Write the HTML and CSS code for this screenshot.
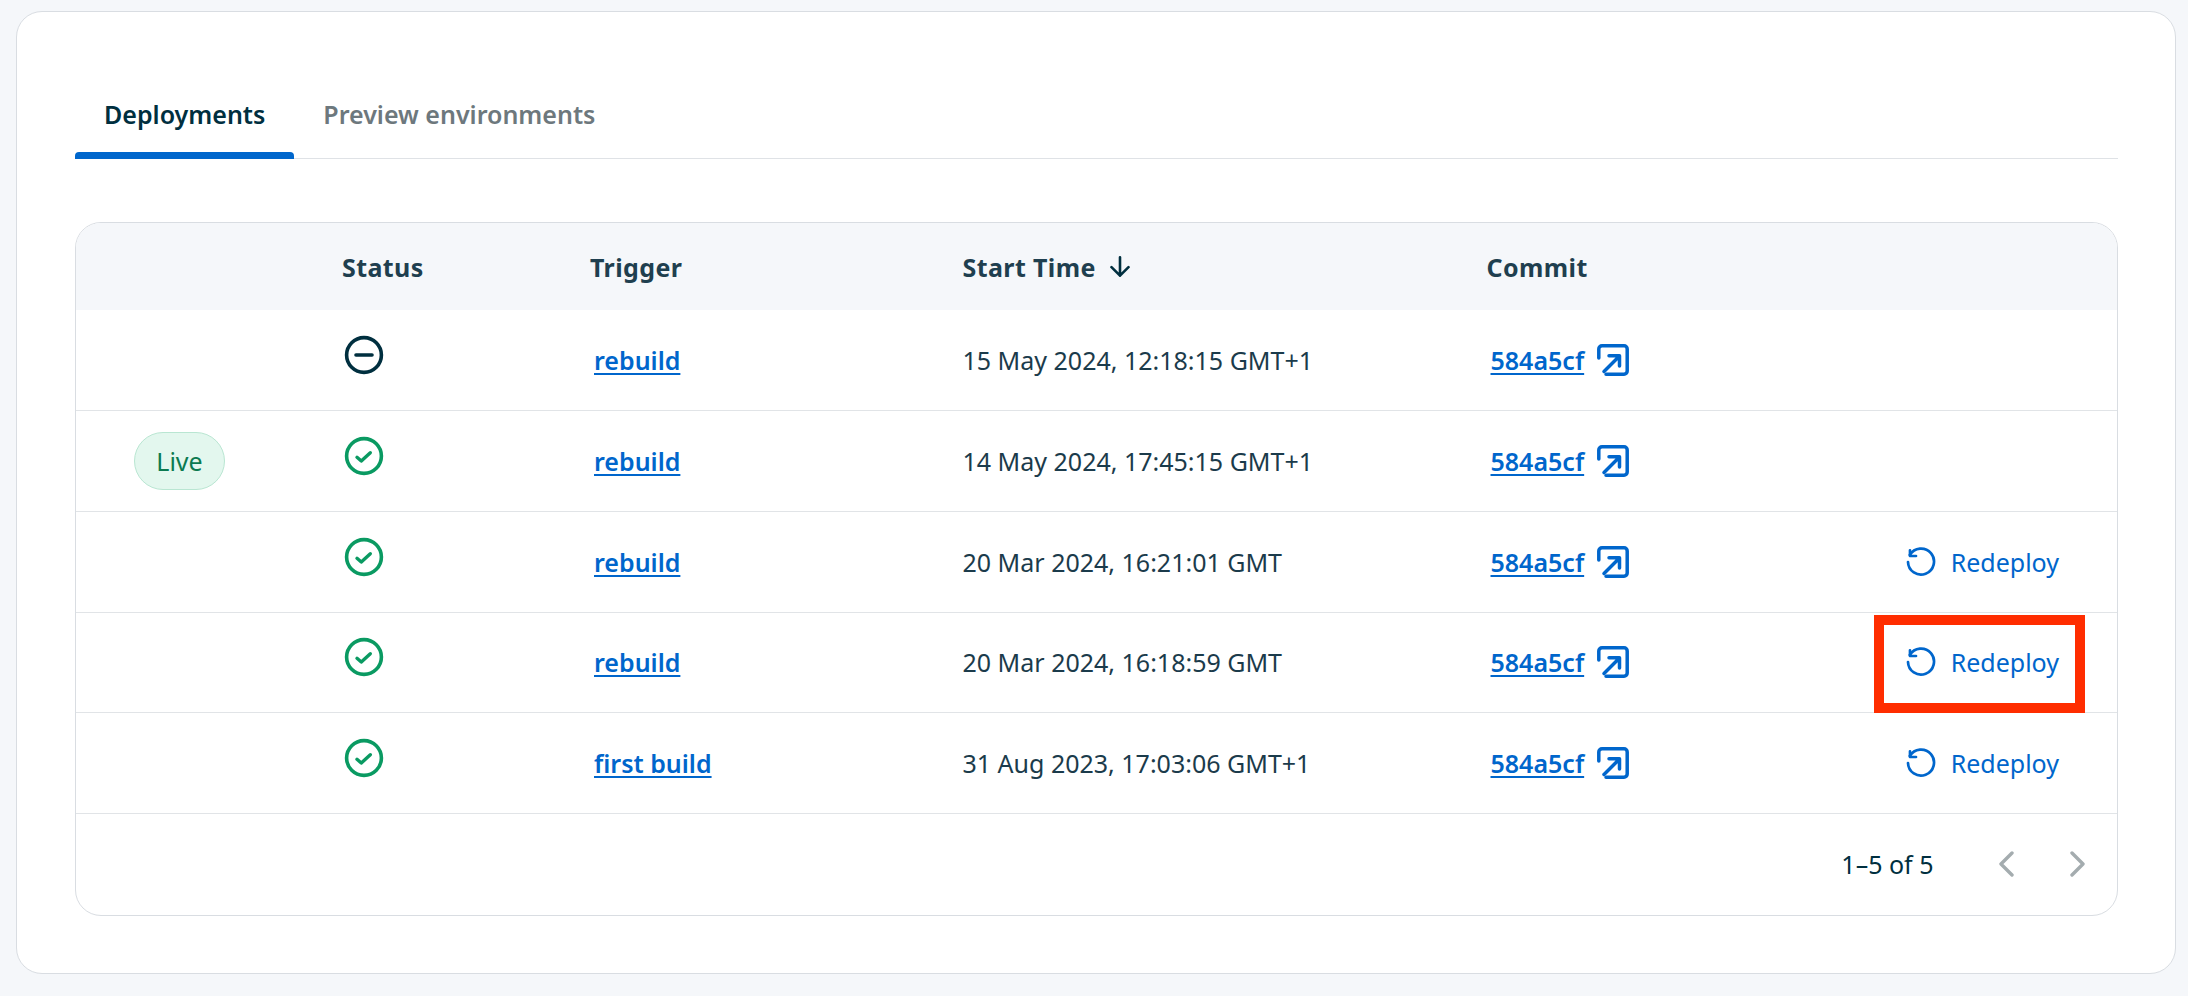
FILE: index.html
```html
<!DOCTYPE html>
<html lang="en">
<head>
<meta charset="utf-8">
<title>Deployments</title>
<link rel="stylesheet" href="styles.css">
</head>
<body>
<svg class="sprites" aria-hidden="true">
  <symbol id="i-minus" viewBox="0 0 40 40"><circle cx="20" cy="20" r="17.4" fill="none" stroke="currentColor" stroke-width="3.6"/><path d="M12 20h16" fill="none" stroke="currentColor" stroke-width="3.6" stroke-linecap="round"/></symbol>
  <symbol id="i-check" viewBox="0 0 40 40"><circle cx="20" cy="20" r="17.4" fill="none" stroke="currentColor" stroke-width="3.6"/><path d="M13 21.300l4.300 3.700 9-8.300" fill="none" stroke="currentColor" stroke-width="3.400" stroke-linecap="round" stroke-linejoin="round"/></symbol>
  <symbol id="i-ext" viewBox="0 0 32 32"><path d="M1.800 14V5a3.200 3.200 0 0 1 3.200-3.200H27a3.200 3.200 0 0 1 3.200 3.200V27a3.200 3.200 0 0 1-3.200 3.200H9" fill="none" stroke="currentColor" stroke-width="3.500" stroke-linecap="round"/><path d="M7 27.500L21 13.500M12 11.800H22.500V22" fill="none" stroke="currentColor" stroke-width="3.500" stroke-linecap="round" stroke-linejoin="round"/></symbol>
  <symbol id="i-redo" viewBox="0 0 30 30"><path d="M3.800 8A13 13 0 1 1 2 15" fill="none" stroke="currentColor" stroke-width="2.700" stroke-linecap="round"/><path d="M4 3.300V9H10" fill="none" stroke="currentColor" stroke-width="2.700" stroke-linecap="round" stroke-linejoin="round"/></symbol>
</svg>
<main class="card">
  <nav class="tabs">
    <a class="tab tab-active">Deployments</a>
    <a class="tab">Preview environments</a>
  </nav>
  <section class="table">
    <div class="row head">
      <div></div>
      <div class="th">Status</div>
      <div class="th">Trigger</div>
      <div class="th sort">Start Time<svg class="sort-icon" viewBox="0 0 20 21"><path d="M10 1.300V19.700M1.500 11.200L10 19.700 18.500 11.200" fill="none" stroke="currentColor" stroke-width="2.600" stroke-linecap="round" stroke-linejoin="round"/></svg></div>
      <div class="th">Commit</div>
      <div></div>
    </div>

    <div class="row">
      <div></div>
      <div class="status"><svg class="st-icon dark"><use href="#i-minus"/></svg></div>
      <div><a class="trigger">rebuild</a></div>
      <div class="time">15 May 2024, 12:18:15 GMT+1</div>
      <div class="commit"><a class="hash">584a5cf</a><svg class="ext"><use href="#i-ext"/></svg></div>
      <div></div>
    </div>

    <div class="row">
      <div class="live-cell"><span class="live">Live</span></div>
      <div class="status"><svg class="st-icon green"><use href="#i-check"/></svg></div>
      <div><a class="trigger">rebuild</a></div>
      <div class="time">14 May 2024, 17:45:15 GMT+1</div>
      <div class="commit"><a class="hash">584a5cf</a><svg class="ext"><use href="#i-ext"/></svg></div>
      <div></div>
    </div>

    <div class="row">
      <div></div>
      <div class="status"><svg class="st-icon green"><use href="#i-check"/></svg></div>
      <div><a class="trigger">rebuild</a></div>
      <div class="time">20 Mar 2024, 16:21:01 GMT</div>
      <div class="commit"><a class="hash">584a5cf</a><svg class="ext"><use href="#i-ext"/></svg></div>
      <div class="action"><a class="redeploy"><svg class="redo"><use href="#i-redo"/></svg>Redeploy</a></div>
    </div>

    <div class="row">
      <div></div>
      <div class="status"><svg class="st-icon green"><use href="#i-check"/></svg></div>
      <div><a class="trigger">rebuild</a></div>
      <div class="time">20 Mar 2024, 16:18:59 GMT</div>
      <div class="commit"><a class="hash">584a5cf</a><svg class="ext"><use href="#i-ext"/></svg></div>
      <div class="action"><a class="redeploy"><svg class="redo"><use href="#i-redo"/></svg>Redeploy</a><span class="highlight"></span></div>
    </div>

    <div class="row">
      <div></div>
      <div class="status"><svg class="st-icon green"><use href="#i-check"/></svg></div>
      <div><a class="trigger">first build</a></div>
      <div class="time">31 Aug 2023, 17:03:06 GMT+1</div>
      <div class="commit"><a class="hash">584a5cf</a><svg class="ext"><use href="#i-ext"/></svg></div>
      <div class="action"><a class="redeploy"><svg class="redo"><use href="#i-redo"/></svg>Redeploy</a></div>
    </div>

    <footer class="pager">
      <span class="count">1–5 of 5</span>
      <svg class="chev" viewBox="0 0 16 26"><path d="M14 2L3 13l11 11" fill="none" stroke="currentColor" stroke-width="3.400" stroke-linecap="round" stroke-linejoin="round"/></svg>
      <svg class="chev" viewBox="0 0 16 26"><path d="M2 2l11 11L2 24" fill="none" stroke="currentColor" stroke-width="3.400" stroke-linecap="round" stroke-linejoin="round"/></svg>
    </footer>
  </section>
</main>
</body>
</html>
```

FILE: styles.css
```css
* { box-sizing: border-box; }
html, body { margin: 0; height: 100%; }
body {
  background: #f5f7fa;
  padding: 11px 12px 22px 16px;
  font-family: "Noto Sans", "Open Sans", sans-serif;
  color: #002f3f;
  overflow: hidden;
}
.sprites { display: none; }
.card {
  height: 963px;
  background: #fff;
  border: 1px solid #d9dde2;
  border-radius: 26px;
  padding: 87px 57px 0 58px;
}
.tabs {
  display: flex;
  border-bottom: 1px solid #dfe2e6;
  margin-bottom: 63px;
}
.tab {
  position: relative;
  padding: 0 29px 29px;
  font-size: 25px;
  line-height: 30px;
  font-weight: 600;
  color: #6d787d;
}
.tab-active { color: #002f3f; }
.tab-active::after {
  content: "";
  position: absolute;
  left: 0;
  right: 0;
  bottom: -1px;
  height: 7px;
  background: #0066cc;
  border-radius: 4px 4px 0 0;
}
.table {
  height: 694px;
  border: 1px solid #d9dde2;
  border-radius: 26px;
  overflow: hidden;
}
.row {
  display: grid;
  grid-template-columns: 266px 248px 372.500px 524px 260px 1fr;
  align-items: center;
  height: 100.750px;
  border-bottom: 1px solid #e1e4e7;
  font-size: 25px;
  line-height: 34px;
}
.row > div { min-width: 0; }
.head {
  height: 87.300px;
  background: #f5f7fa;
  border-bottom: 0;
}
.th {
  font-weight: 700;
  letter-spacing: 0.4px;
  color: #1f3f4f;
}
.sort { display: flex; align-items: center; }
.sort-icon { width: 20px; height: 21px; color: #002f3f; margin-left: 14px; }
.status { padding: 0 0 10px 2px; line-height: 0; }
.st-icon { width: 40px; height: 40px; }
.dark { color: #002f3f; }
.green { color: #0a9a62; }
.trigger, .hash {
  font-weight: 600;
  color: #0066cc;
  text-decoration: underline;
  text-underline-offset: 3px;
}
.trigger { margin-left: 4px; }
.time { color: #1b3b4b; }
.commit { display: flex; align-items: center; padding-left: 4px; }
.ext { width: 32px; height: 32px; margin-left: 13px; color: #0066cc; }
.live-cell { padding-left: 58px; }
.live {
  display: inline-flex;
  align-items: center;
  justify-content: center;
  width: 91px;
  height: 58px;
  background: #e3f7ee;
  border: 1px solid #b9e6d2;
  border-radius: 29px;
  color: #0b7a50;
  vertical-align: middle;
}
.action {
  position: relative;
  height: 100%;
  display: flex;
  align-items: center;
  justify-content: flex-end;
  padding-right: 58px;
}
.redeploy { display: inline-flex; align-items: center; color: #0066cc; }
.redo { width: 30px; height: 30px; margin-right: 15px; }
.highlight {
  position: absolute;
  right: 32px;
  top: 2px;
  width: 211px;
  height: 98px;
  border: 10px solid #ff2d00;
}
.pager {
  display: flex;
  align-items: center;
  justify-content: flex-end;
  height: 100px;
  padding-right: 31.500px;
  font-size: 25px;
}
.count { margin-right: 64px; color: #002f3f; }
.chev { width: 16px; height: 26px; color: #a4acaf; }
.chev + .chev { margin-left: 56px; }
```
